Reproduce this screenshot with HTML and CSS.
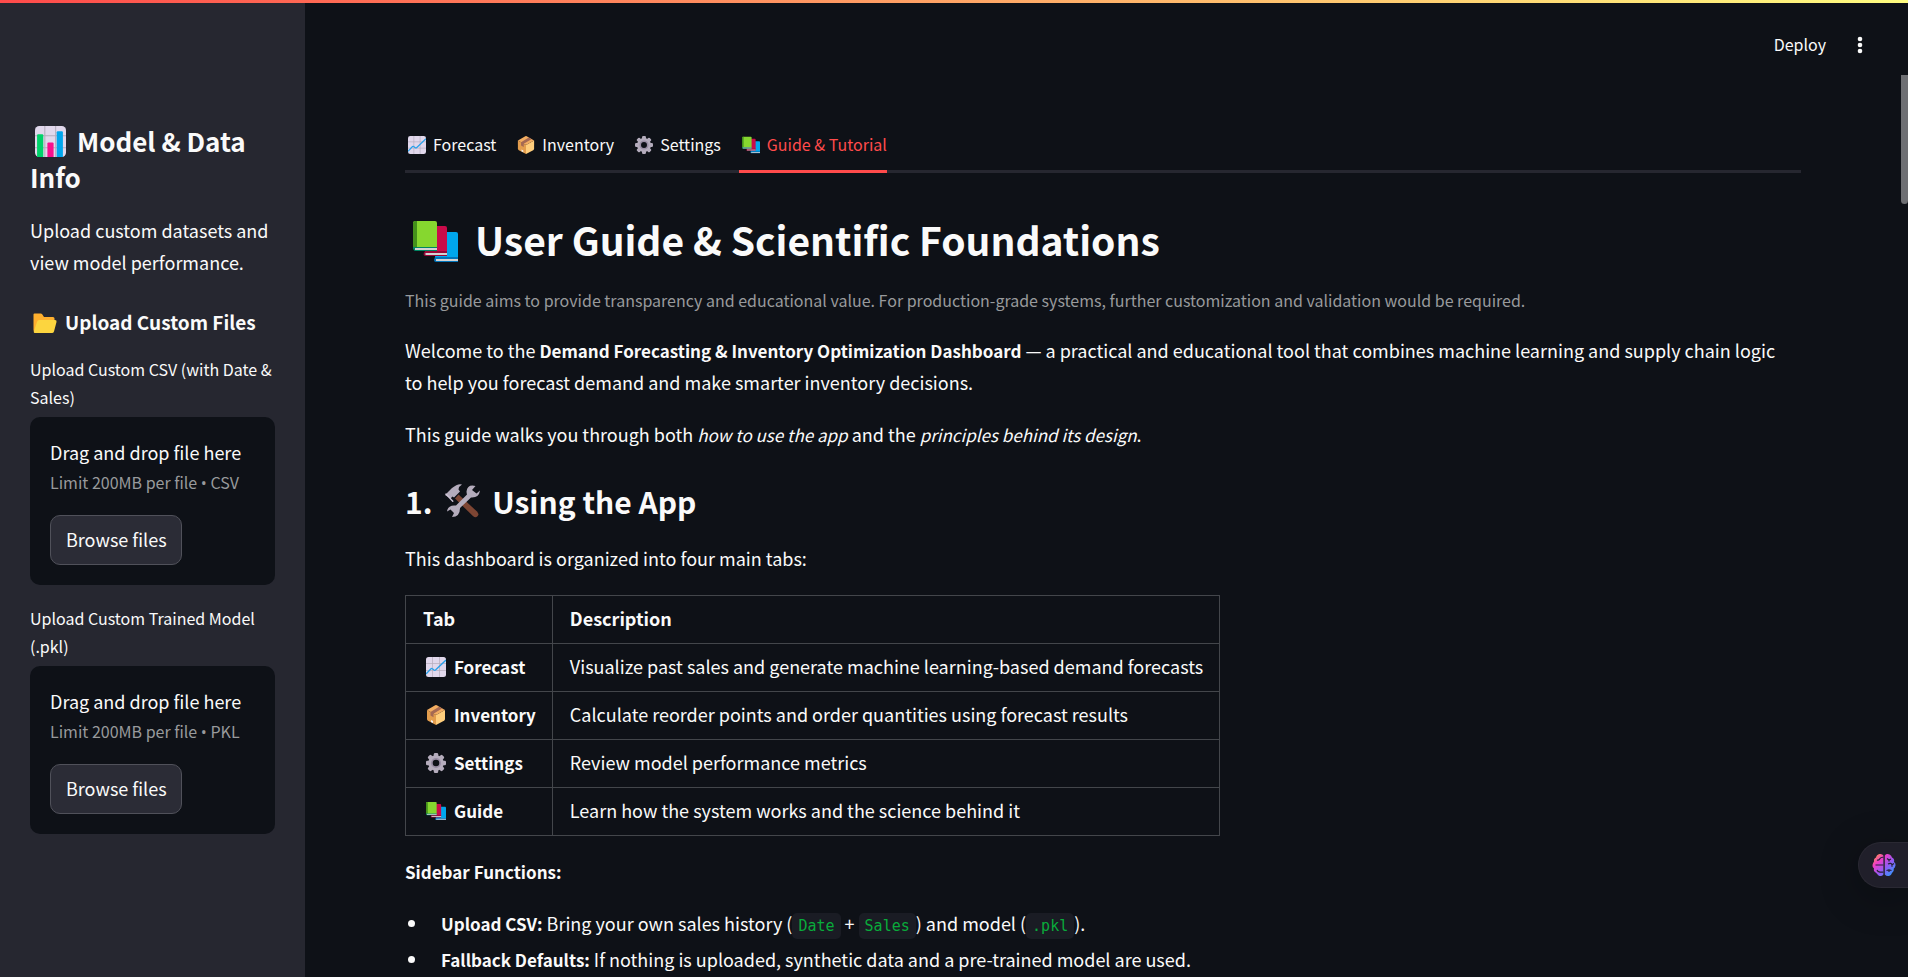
FILE: index.html
```html
<!DOCTYPE html>
<html lang="en">
<head>
<meta charset="utf-8">
<title>Demand Forecasting &amp; Inventory Optimization</title>
<link rel="stylesheet" href="styles.css">
</head>
<body>
<svg class="sprite" aria-hidden="true">
  <defs>
    <linearGradient id="brain-fill" x1="0" y1="0" x2="1" y2="1">
      <stop offset="0" stop-color="#ffb020"/><stop offset=".3" stop-color="#f03cc8"/><stop offset=".6" stop-color="#8f5cf5"/><stop offset="1" stop-color="#18a8ff"/>
    </linearGradient>
    <symbol id="i-bars" viewBox="0 0 30 30">
      <rect width="30" height="30" rx="4" fill="#e1d8ec"/>
      <path d="M9.5 0v30M20 0v30M0 9.5h30M0 21h30" stroke="#b4acbc" fill="none"/>
      <path d="M2 30V9a1 1 0 0 1 1-1h4a1 1 0 0 1 1 1v21z" fill="#00d26a"/>
      <path d="M12 30V17a1 1 0 0 1 1-1h4a1 1 0 0 1 1 1v13z" fill="#f8108d"/>
      <path d="M21 30V6a1 1 0 0 1 1-1h4a1 1 0 0 1 1 1v24z" fill="#00a6ed"/>
    </symbol>
    <symbol id="i-folder" viewBox="0 0 24 21">
      <path d="M1.500.5h6.200q1 0 1.500.8L11 4h9q1.500 0 1.500 1.500V8L19 19H2Q.5 19 .5 17V1.500Q.5.5 1.500.5z" fill="#ffb02e"/>
      <path d="M6.300 7h15.700q2 0 1.500 2L21 18.500q-.5 1.500-2 1.500H2Q.5 20 .8 18.500L4 9q.6-2 2.300-2z" fill="#fcd53f"/>
    </symbol>
    <symbol id="i-chart" viewBox="0 0 20 20">
      <rect width="20" height="20" rx="2.500" fill="#e1d8ec"/>
      <path d="M6.500 0v20M13.500 0v20M0 6.500h20M0 13.500h20" stroke="#b4acbc" stroke-width=".7" fill="none"/>
      <path d="M0 17l5-5.300q.7-.6 1.400 0l1.600 1.300q.8.6 1.500 0L20 3" stroke="#26a0ea" stroke-width="1.300" fill="none"/>
    </symbol>
    <symbol id="i-box" viewBox="0 0 20 20">
      <path d="M1 5l9 5v10l-8-4.300q-1-.6-1-1.700z" fill="#e39d4d"/>
      <path d="M19 5l-9 5v10l8-4.300q1-.6 1-1.700z" fill="#ffce7c"/>
      <path d="M1 5l8.200-4.700q.8-.4 1.600 0L19 5l-9 5z" fill="#f3ad61"/>
      <path d="M4.500 7L13 1.800l3 1.700-8.500 5.200v3.500l-3-1.700z" fill="#a56953"/>
      <path d="M5 15l2 1v2l-2-1z" fill="#f4f4f4"/>
    </symbol>
    <symbol id="i-gear" viewBox="0 0 20 20">
      <g fill="#b4acbc">
        <rect x="7.800" width="4.400" height="20" rx="1.300"/>
        <rect x="7.800" width="4.400" height="20" rx="1.300" transform="rotate(45 10 10)"/>
        <rect x="7.800" width="4.400" height="20" rx="1.300" transform="rotate(90 10 10)"/>
        <rect x="7.800" width="4.400" height="20" rx="1.300" transform="rotate(135 10 10)"/>
        <circle cx="10" cy="10" r="7.800"/>
      </g>
      <circle cx="10" cy="10" r="4.200" fill="#0e1117" stroke="#998ea4" stroke-width="1.800"/>
    </symbol>
    <symbol id="i-books" viewBox="0 0 45 45">
      <path d="M23 13h20q2 0 2 2v25H22z" fill="#00a6ed"/><path d="M22 38h23v5H23q-2 0-2-2z" fill="#0074ba"/><path d="M23 40h22v2H23z" fill="#d3d3d3"/>
      <path d="M13 7h19q2 0 2 2v25H12z" fill="#ca0b4a"/><path d="M12 32h22v5H12.500q-2 0-2-2z" fill="#990838"/><path d="M12.500 34H34v2H12.500z" fill="#d3d3d3"/>
      <path d="M3 2h19q2 0 2 2v25H0V4q0-2 3-2z" fill="#86d72f"/><path d="M2.500 2H4v27l-4 1V4q0-2 2.500-2z" fill="#44911b"/><path d="M0 28h24v4H2.500Q0 32 0 28z" fill="#008463"/><path d="M2 29h22v2H2z" fill="#d3d3d3"/>
    </symbol>
    <symbol id="i-tools" viewBox="0 0 36 34">
      <path d="M14.500 10.500L33 27.500q2.500 2.800.5 4.800t-4.600-.3L11 14.500z" fill="#7d4533"/>
      <path d="M1 11L8 4q6-5 10-3.500-3 1.500-3.500 5l1.500 2-6 6-1.500-1-2 2z" fill="#b4acbc"/>
      <path d="M1.500 10.500l7 7.500q1 .2 1-1L2.500 9.500q-2-.5-1 1z" fill="#cdc4d6"/>
      <path d="M31.500 2q-8-2-9 5.500.1 2 .5 3L12 21.500q-8-1-9 6l3.500-2 3.500 3.500-2 4q8 0 8-9L27 13.500q8 .5 9-7L32.500 9.500 28 6z" fill="#b4acbc"/>
    </symbol>
    <symbol id="i-brain" viewBox="0 0 24 24">
      <path fill="url(#brain-fill)" d="M11.400 2.500v19Q9.500 24 6.500 22.500L4 19.800Q1.200 18.500 2 15.500.2 14 .5 12T2 8.500Q1.500 5.500 4 4.500 4.500 1.500 7.500 1q2.900-.5 3.900 1.500zM12.800 2.500Q14.500.3 17.500 1.500q2 .8 2.500 3 2.800 1.200 2 4.500 2 1.200 1.500 3.500t-1.700 3q.5 3-1.800 4.500-.7 2.500-3 3-2.600.5-4.200-1.500z"/>
      <path d="M5 7q2 .8 3-1.500 1-1.500 3.400-1.200M3.500 12h8M5 17q.7 2 3 2.200h3.400M15 5.500l2 1.500 2-1M17 7v1.500M16 11q3-1.500 4 .8l2-1.300M20 11.800v2M14.500 17.500l2.500-.7 2.500.7M17 17v2" fill="none" stroke="#262036" stroke-width="1.200"/>
    </symbol>
  </defs>
</svg>

<div class="rainbow"></div>

<div class="app">
  <aside class="sidebar">
    <h2 class="side-title"><svg class="emoji emoji-side" aria-hidden="true"><use href="#i-bars"/></svg>Model &amp; Data Info</h2>
    <p class="side-text">Upload custom datasets and view model performance.</p>
    <h3 class="side-subtitle"><svg class="emoji emoji-folder" aria-hidden="true"><use href="#i-folder"/></svg>Upload Custom Files</h3>

    <div class="uploader">
      <label class="field-label" for="csv-browse">Upload Custom CSV (with Date &amp; Sales)</label>
      <div class="dropzone">
        <div>Drag and drop file here</div>
        <div class="limit">Limit 200MB per file <span class="dot">•</span> CSV</div>
        <button class="browse" id="csv-browse" type="button">Browse files</button>
      </div>
    </div>
    <div class="uploader">
      <label class="field-label" for="pkl-browse">Upload Custom Trained Model (.pkl)</label>
      <div class="dropzone">
        <div>Drag and drop file here</div>
        <div class="limit">Limit 200MB per file <span class="dot">•</span> PKL</div>
        <button class="browse" id="pkl-browse" type="button">Browse files</button>
      </div>
    </div>
  </aside>

  <div class="page">
    <header class="toolbar">
      <button class="deploy" type="button">Deploy</button>
      <button class="more" type="button" aria-label="Main menu">
        <svg width="20" height="20" viewBox="0 0 20 20" fill="#fafafa" aria-hidden="true"><circle cx="10" cy="4" r="2.300"/><circle cx="10" cy="10" r="2.300"/><circle cx="10" cy="16" r="2.300"/></svg>
      </button>
    </header>

    <main class="content">
      <div class="tabs" role="tablist">
        <button class="tab" role="tab" type="button"><svg class="emoji emoji-tab" aria-hidden="true"><use href="#i-chart"/></svg>Forecast</button>
        <button class="tab" role="tab" type="button"><svg class="emoji emoji-tab" aria-hidden="true"><use href="#i-box"/></svg>Inventory</button>
        <button class="tab" role="tab" type="button"><svg class="emoji emoji-tab" aria-hidden="true"><use href="#i-gear"/></svg>Settings</button>
        <button class="tab tab-active" role="tab" type="button" aria-selected="true"><svg class="emoji emoji-tab" aria-hidden="true"><use href="#i-books"/></svg>Guide &amp; Tutorial</button>
      </div>

      <h1 class="title"><svg class="emoji emoji-title" aria-hidden="true"><use href="#i-books"/></svg>User Guide &amp; Scientific Foundations</h1>
      <p class="caption">This guide aims to provide transparency and educational value. For production-grade systems, further customization and validation would be required.</p>
      <p class="text">Welcome to the <strong>Demand Forecasting &amp; Inventory Optimization Dashboard</strong> — a practical and educational tool that combines machine learning and supply chain logic to help you forecast demand and make smarter inventory decisions.</p>
      <p class="text">This guide walks you through both <em>how to use the app</em> and the <em>principles behind its design</em>.</p>

      <h2 class="section">1. <svg class="emoji emoji-section" aria-hidden="true"><use href="#i-tools"/></svg>Using the App</h2>
      <p class="text">This dashboard is organized into four main tabs:</p>

      <table class="tab-table">
        <thead>
          <tr><th>Tab</th><th>Description</th></tr>
        </thead>
        <tbody>
          <tr><td><svg class="emoji emoji-cell" aria-hidden="true"><use href="#i-chart"/></svg><strong>Forecast</strong></td><td>Visualize past sales and generate machine learning-based demand forecasts</td></tr>
          <tr><td><svg class="emoji emoji-cell" aria-hidden="true"><use href="#i-box"/></svg><strong>Inventory</strong></td><td>Calculate reorder points and order quantities using forecast results</td></tr>
          <tr><td><svg class="emoji emoji-cell" aria-hidden="true"><use href="#i-gear"/></svg><strong>Settings</strong></td><td>Review model performance metrics</td></tr>
          <tr><td><svg class="emoji emoji-cell" aria-hidden="true"><use href="#i-books"/></svg><strong>Guide</strong></td><td>Learn how the system works and the science behind it</td></tr>
        </tbody>
      </table>

      <p class="text"><strong>Sidebar Functions:</strong></p>
      <ul class="list">
        <li><strong>Upload CSV:</strong> Bring your own sales history (<code>Date</code> + <code>Sales</code>) and model (<code>.pkl</code>).</li>
        <li><strong>Fallback Defaults:</strong> If nothing is uploaded, synthetic data and a pre-trained model are used.</li>
      </ul>
    </main>
    <div class="scroll-thumb"></div>
  </div>
</div>

<button class="assistant" type="button" aria-label="Assistant"><svg width="24" height="24" aria-hidden="true"><use href="#i-brain"/></svg></button>
</body>
</html>
```

FILE: styles.css
```css
* {
  box-sizing: border-box;
}

body {
  margin: 0;
  background: #0e1117;
  color: #fafafa;
  font-family: "Noto Sans CJK SC", "Noto Sans", sans-serif;
  font-size: 18px;
  line-height: 32px;
}

button {
  border: 0;
  padding: 0;
  background: none;
  color: inherit;
  font: inherit;
  cursor: pointer;
}

h1,
h2,
h3,
p,
ul {
  margin: 0;
}

strong,
em {
  font-size: 17px;
  line-height: 28px;
}

.sprite {
  position: absolute;
  width: 0;
  height: 0;
}

.rainbow {
  position: fixed;
  top: 0;
  left: 0;
  right: 0;
  z-index: 2;
  height: 3px;
  background: linear-gradient(to right, #ff4b4b, #fffd80);
}

.app {
  display: grid;
  grid-template-columns: 305px 1fr;
  height: 100vh;
}

/* Sidebar */

.sidebar {
  overflow: hidden;
  padding: 123px 30px 30px;
  background: #262730;
}

.side-title {
  margin-bottom: 19px;
  font-size: 26px;
  line-height: 36px;
}

.side-text {
  margin-bottom: 28px;
}

.side-subtitle {
  margin-bottom: 17px;
  font-size: 19px;
}

.uploader {
  margin-bottom: 19px;
}

.field-label {
  display: block;
  margin-bottom: 6px;
  font-size: 16px;
  line-height: 28px;
}

.dropzone {
  padding: 19px 20px 20px;
  border-radius: 10px;
  background: #0e1117;
}

.limit {
  margin-bottom: 18px;
  color: #989a9c;
  font-size: 16px;
  line-height: 28px;
}

.dot {
  font-family: "Open Sans", "Noto Sans", sans-serif;
}

.browse {
  display: block;
  height: 50px;
  padding: 0 14px 2px 15px;
  border: 1px solid #50515a;
  border-radius: 10px;
  background: #2b2c36;
}

/* Main area */

.page {
  position: relative;
  overflow: hidden;
}

.toolbar {
  display: flex;
  align-items: center;
  justify-content: flex-end;
  gap: 24px;
  height: 75px;
  padding: 14px 38px 0 0;
  font-size: 16px;
}

.toolbar button {
  display: flex;
  align-items: center;
  height: 32px;
}

.toolbar .deploy {
  padding-bottom: 2px;
}

.content {
  padding: 48px 107px 0 100px;
}

.scroll-thumb {
  position: absolute;
  top: 75px;
  right: 0;
  width: 7px;
  height: 129px;
  border-radius: 0 0 4px 4px;
  background: #6e6f73;
}

.tabs {
  display: flex;
  gap: 18px;
  height: 50px;
  margin-bottom: 39px;
  box-shadow: inset 0 -3px #262730;
}

.tab {
  padding-bottom: 5px;
  border-bottom: 3px solid transparent;
  font-size: 16px;
  line-height: 28px;
}

.tab-active {
  border-color: #ff4b4b;
  color: #ff4b4b;
}

.title {
  margin-bottom: 20px;
  font-size: 39px;
  line-height: 54px;
}

.caption {
  margin-bottom: 20px;
  color: #989a9c;
  font-size: 16px;
  line-height: 28px;
}

.text {
  margin-bottom: 20px;
  padding-right: 8px;
}

.section {
  margin: 29px 0 19px;
  font-size: 30px;
  line-height: 44px;
}

.tab-table {
  margin: 21px 0 19px;
  border-collapse: collapse;
}

.tab-table th,
.tab-table td {
  height: 48px;
  padding: 6px 16px 9px 17px;
  border: 1px solid #43464b;
  text-align: left;
}

.list {
  padding-left: 24px;
}

.list li {
  margin-bottom: 4px;
  padding-left: 12px;
}

code {
  padding: 4px 6px;
  border-radius: 5px;
  background: #1a1c24;
  color: #09ab3b;
  font-family: "DejaVu Sans Mono", monospace;
  font-size: 15px;
  line-height: 20px;
}

/* Inline pictograms */

.emoji-tab {
  width: 18px;
  height: 18px;
  margin: 0 7px 0 3px;
  vertical-align: -3px;
}

.emoji-cell {
  width: 20px;
  height: 20px;
  margin: 0 8px 0 3px;
  vertical-align: -3px;
}

.emoji-side {
  width: 31px;
  height: 31px;
  margin: 0 11px 0 5px;
  vertical-align: -5px;
}

.emoji-folder {
  width: 24px;
  height: 21px;
  margin: 0 8px 0 3px;
  vertical-align: -4px;
}

.emoji-title {
  width: 45px;
  height: 45px;
  margin: 0 17px 0 8px;
  vertical-align: -8px;
}

.emoji-section {
  width: 36px;
  height: 34px;
  margin: 0 12px 0 5px;
  vertical-align: -4px;
}

/* Assistant launcher */

.assistant {
  position: fixed;
  right: 0;
  bottom: 89px;
  display: flex;
  align-items: center;
  width: 50px;
  height: 46px;
  padding-left: 13px;
  border: 1px solid #2a2933;
  border-right: 0;
  border-radius: 23px 0 0 23px;
  background: #201f2a;
  box-shadow: 0 8px 40px rgba(0, 0, 0, 0.3);
}
```
